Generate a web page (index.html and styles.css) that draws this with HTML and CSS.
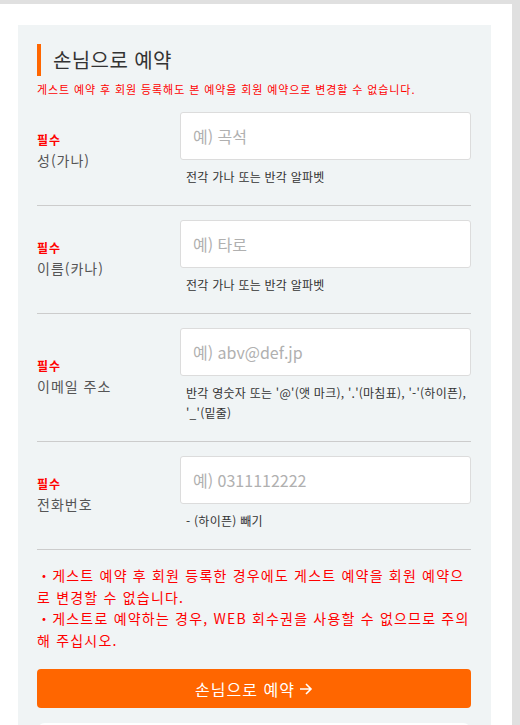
FILE: index.html
```html
<!DOCTYPE html>
<html lang="ko">
<head>
    <meta charset="UTF-8">
    <meta name="viewport" content="width=device-width, initial-scale=1.0">
    <title>손님으로 예약</title>
    <link rel="stylesheet" href="styles.css">
</head>
<body>
    <div class="page">
        <div class="panel">
            <h2 class="title">손님으로 예약</h2>
            <p class="lead">게스트 예약 후 회원 등록해도 본 예약을 회원 예약으로 변경할 수 없습니다.</p>

            <form id="guest">
                <div class="row">
                    <label class="label" for="lastName">
                        <span class="req">필수</span>
                        <span class="name">성(가나)</span>
                    </label>
                    <div class="field">
                        <input type="text" id="lastName" placeholder="예) 곡석">
                        <p class="hint">전각 가나 또는 반각 알파벳</p>
                    </div>
                </div>

                <div class="row">
                    <label class="label" for="firstName">
                        <span class="req">필수</span>
                        <span class="name">이름(카나)</span>
                    </label>
                    <div class="field">
                        <input type="text" id="firstName" placeholder="예) 타로">
                        <p class="hint">전각 가나 또는 반각 알파벳</p>
                    </div>
                </div>

                <div class="row">
                    <label class="label" for="email">
                        <span class="req">필수</span>
                        <span class="name">이메일 주소</span>
                    </label>
                    <div class="field">
                        <input type="email" id="email" placeholder="예) abv@def.jp">
                        <p class="hint">반각 영숫자 또는 '@'(앳 마크), '.'(마침표), '-'(하이픈), '_'(밑줄)</p>
                    </div>
                </div>

                <div class="row">
                    <label class="label" for="tel">
                        <span class="req">필수</span>
                        <span class="name">전화번호</span>
                    </label>
                    <div class="field">
                        <input type="tel" id="tel" placeholder="예) 0311112222">
                        <p class="hint">- (하이픈) 빼기</p>
                    </div>
                </div>

                <div class="notes">
                    <p>・게스트 예약 후 회원 등록한 경우에도 게스트 예약을 회원 예약으로 변경할 수 없습니다.</p>
                    <p>・게스트로 예약하는 경우, WEB 회수권을 사용할 수 없으므로 주의해 주십시오.</p>
                </div>

                <button type="button" class="submit">
                    손님으로 예약
                    <svg width="14" height="14" viewBox="0 0 14 14" fill="none" stroke="#fff" stroke-width="1.6">
                        <path d="M1 7h11M7 2l5 5-5 5"/>
                    </svg>
                </button>
            </form>

            <div class="next"></div>
        </div>
    </div>
</body>
</html>
```

FILE: styles.css
```css
body {
    margin: 0;
    padding: 4px 8px 0 0;
    background: #e0e0e0;
    font-family: "Noto Sans CJK KR", "Noto Sans", sans-serif;
    color: #333;
}
.page {
    background: #fff;
    padding: 21px 21px 0 18px;
    min-height: 700px;
}
.panel {
    background: #f0f4f5;
    padding: 19px 20px 0 19px;
}
.title {
    margin: 0;
    border-left: 4px solid #ff6600;
    padding-left: 12px;
    height: 32px;
    font-size: 20px;
    font-weight: normal;
    line-height: 32px;
    letter-spacing: 0.4px;
    color: #333;
}
.lead {
    margin: 4px 0 0;
    font-size: 11px;
    line-height: 18px;
    letter-spacing: 0.9px;
    color: #f00;
}
.row {
    display: flex;
    align-items: center;
    padding: 14px 0 18px;
    border-bottom: 1px solid #ccc;
}
.label {
    flex: 0 0 143px;
    display: flex;
    flex-direction: column;
    line-height: 21px;
}
.req {
    font-size: 12px;
    font-weight: bold;
    letter-spacing: 1px;
    color: #f00;
}
.name {
    font-size: 14px;
    letter-spacing: 1px;
    color: #555;
}
.field {
    flex: 1;
}
input {
    box-sizing: border-box;
    width: 100%;
    height: 48px;
    padding: 0 12px;
    border: 1px solid #dcdcdc;
    border-radius: 3px;
    background: #fff;
    font-family: inherit;
    font-size: 16px;
    color: #333;
}
input::placeholder {
    color: #b0b0b0;
}
.hint {
    margin: 7px 0 0 6px;
    font-size: 12px;
    line-height: 20px;
    letter-spacing: 0.25px;
    color: #333;
}
.notes {
    padding-top: 15px;
}
.notes p {
    margin: 0;
    font-size: 14px;
    line-height: 21.5px;
    letter-spacing: 1.2px;
    color: #f00;
}
.submit {
    display: flex;
    justify-content: center;
    align-items: center;
    gap: 4px;
    width: 100%;
    height: 39px;
    margin-top: 18px;
    border: none;
    border-radius: 4px;
    background: #ff6600;
    color: #fff;
    font-family: inherit;
    font-size: 16px;
    letter-spacing: 1px;
    cursor: pointer;
}
.next {
    height: 40px;
    margin-top: 15px;
    background: #fff;
    border-radius: 8px;
}
```
